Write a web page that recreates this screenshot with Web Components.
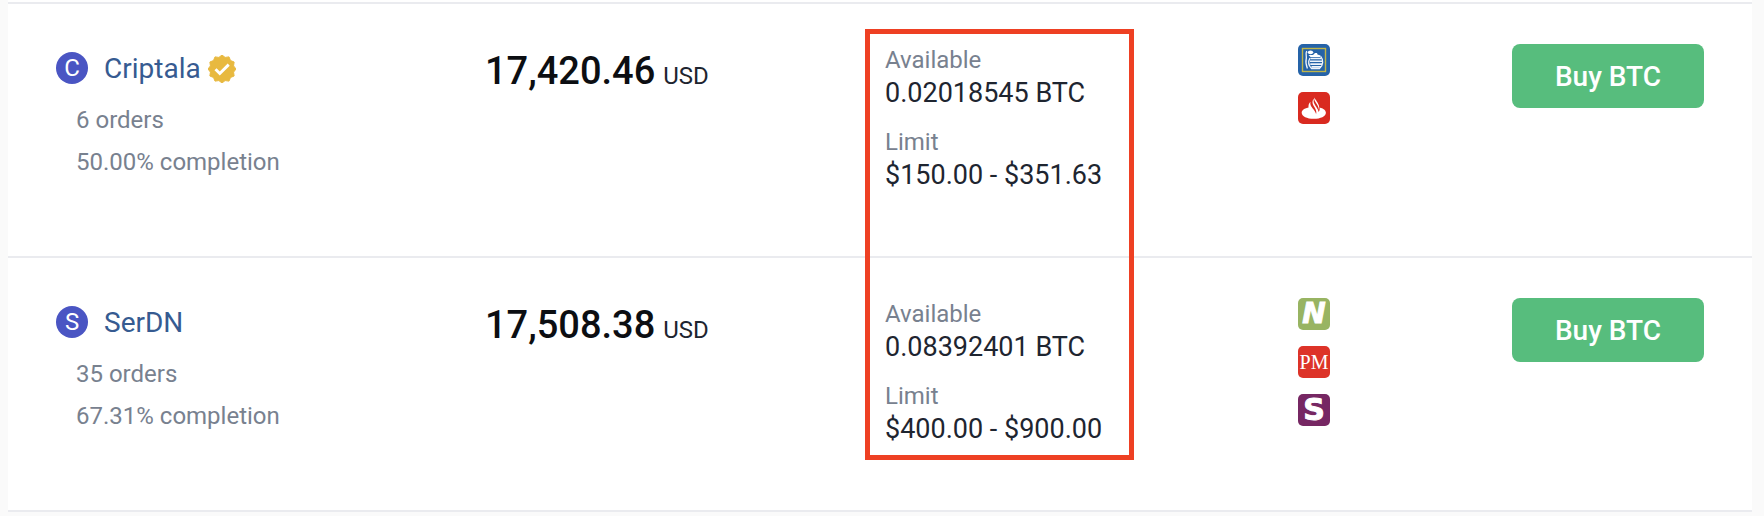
<!DOCTYPE html>
<html lang="en">
<head>
<meta charset="utf-8">
<meta name="viewport" content="width=device-width, initial-scale=1">
<title>P2P offers</title>
<style>
  body {
    margin: 0;
    background: #fafafa;
    color: #1e2530;
    font-family: Roboto, "Liberation Sans", sans-serif;
    --columns: 429fr 400fr 413fr 406fr;
    --gutter: 48px;
    --muted: #78818f;
    --line: #eaebef;
  }
</style>
</head>
<body>
<offer-list>
  <offer-row>
    <offer-trader slot="trader" name="Criptala" orders="6" completion="50.00" verified></offer-trader>
    <offer-price slot="price" amount="17,420.46" currency="USD"></offer-price>
    <offer-limits slot="limits" available="0.02018545 BTC" limit="$150.00 - $351.63"></offer-limits>
    <payment-badge slot="payments" kind="pichincha"></payment-badge>
    <payment-badge slot="payments" kind="santander"></payment-badge>
    <buy-button slot="action">Buy BTC</buy-button>
  </offer-row>
  <offer-row>
    <offer-trader slot="trader" name="SerDN" orders="35" completion="67.31"></offer-trader>
    <offer-price slot="price" amount="17,508.38" currency="USD"></offer-price>
    <offer-limits slot="limits" available="0.08392401 BTC" limit="$400.00 - $900.00"></offer-limits>
    <payment-badge slot="payments" kind="neteller"></payment-badge>
    <payment-badge slot="payments" kind="perfect"></payment-badge>
    <payment-badge slot="payments" kind="skrill"></payment-badge>
    <buy-button slot="action">Buy BTC</buy-button>
  </offer-row>
</offer-list>

<script>
class BaseElement extends HTMLElement {
  connectedCallback() {
    if (this.shadowRoot) return;
    this.attachShadow({ mode: "open" }).innerHTML = this.render();
  }
  attr(name) { return this.getAttribute(name) || ""; }
}

customElements.define("offer-list", class extends BaseElement {
  render() {
    return `
      <style>
        :host { display: block; position: relative; margin: 0 12px 0 8px; padding-top: 2px;
                background: #fff; border-bottom: 2px solid var(--line); }
        .overlay { position: absolute; inset: 29px 0 50px; padding: 0 var(--gutter);
                   display: grid; grid-template-columns: var(--columns); pointer-events: none; }
        .frame { grid-column: 3; box-sizing: border-box; width: 269px; margin-left: -20px;
                 border: 5px solid #ee4023; }
      </style>
      <div role="list"><slot></slot></div>
      <div class="overlay" aria-hidden="true"><div class="frame"></div></div>`;
  }
});

customElements.define("offer-row", class extends BaseElement {
  connectedCallback() {
    super.connectedCallback();
    this.setAttribute("role", "listitem");
  }
  render() {
    return `
      <style>
        :host { display: grid; grid-template-columns: var(--columns); align-items: start;
                box-sizing: border-box; min-height: 254px; padding: 40px var(--gutter) 32px;
                border-top: 2px solid var(--line); }
        .payments { display: grid; gap: 16px; justify-items: start; }
        .last { display: flex; justify-content: space-between; align-items: flex-start; }
      </style>
      <slot name="trader"></slot>
      <slot name="price"></slot>
      <slot name="limits"></slot>
      <div class="last">
        <div class="payments"><slot name="payments"></slot></div>
        <slot name="action"></slot>
      </div>`;
  }
});

customElements.define("offer-trader", class extends BaseElement {
  render() {
    const name = this.attr("name");
    const points = [];
    for (let i = 0; i < 24; i++) {
      const r = i % 2 ? 12 : 14, a = i * Math.PI / 12;
      points.push((14 + r * Math.cos(a)).toFixed(2) + "," + (14 + r * Math.sin(a)).toFixed(2));
    }
    const seal = `<svg viewBox="0 0 28 28" role="img" aria-label="Verified">
      <polygon points="${points.join(" ")}" fill="#e8b93f" stroke="#e8b93f" stroke-linejoin="round"/>
      <path d="M7.500 14.200l4.300 4.300 8.900-8.900" fill="none" stroke="#fff" stroke-width="2.900"/></svg>`;
    return `
      <style>
        :host { display: block; }
        .head { display: flex; align-items: center; height: 48px; }
        .avatar { width: 32px; height: 32px; margin-right: 16px; border-radius: 50%; background: #4a55c3;
                  color: #fff; font-size: 24px; line-height: 32px; text-align: center; }
        .name { display: flex; align-items: center; gap: 7px; padding-top: 2px; }
        a { color: #365b91; font-size: 28px; line-height: 32px; text-decoration: none; }
        svg { width: 28px; height: 28px; }
        ul { list-style: none; margin: 7px 0 0; padding: 0 0 0 20px; color: var(--muted);
             font-size: 24px; line-height: 42px; }
      </style>
      <div class="head">
        <span class="avatar" aria-hidden="true">${name[0]}</span>
        <div class="name"><a href="#${name}">${name}</a>${this.hasAttribute("verified") ? seal : ""}</div>
      </div>
      <ul>
        <li>${this.attr("orders")} orders</li>
        <li>${this.attr("completion")}% completion</li>
      </ul>`;
  }
});

customElements.define("offer-price", class extends BaseElement {
  render() {
    return `
      <style>
        :host { display: flex; align-items: baseline; gap: 8px; line-height: 54px; }
        .amount { color: #0c0e12; font-size: 38px; font-weight: 500; }
        .currency { font-size: 24px; }
      </style>
      <span class="amount">${this.attr("amount")}</span>
      <span class="currency">${this.attr("currency")}</span>`;
  }
});

customElements.define("offer-limits", class extends BaseElement {
  render() {
    return `
      <style>
        :host { display: block; }
        dl { display: grid; gap: 16px; margin: 0; }
        dt { color: var(--muted); font-size: 24px; line-height: 32px; }
        dd { margin: 0; font-size: 27px; line-height: 34px; }
      </style>
      <dl>
        <div><dt>Available</dt><dd>${this.attr("available")}</dd></div>
        <div><dt>Limit</dt><dd>${this.attr("limit")}</dd></div>
      </dl>`;
  }
});

const PAYMENTS = {
  pichincha: { label: "Banco Pichincha", color: "#2563a8", art: `
    <svg viewBox="0 0 32 32"><rect x="4.500" y="4.500" width="23" height="23" fill="none" stroke="#c0b64a" stroke-width="1.400"/>
    <g fill="none" stroke="#eef4fb">
    <path d="M8.700 7c-1.500 3 .2 5-.5 8-.7 3-.2 6 1.200 9.500" stroke-width="1.300"/>
    <path d="M12 14c-2 3.500-1.500 7.500 1.500 10.500h8c3.800-2.800 4.200-8.500 1.200-12" stroke-width="1.300"/>
    <path d="M12.500 14.500h10.500M12 17.300h12M12.300 20.100h11.700M13.500 22.900h9.500" stroke-width="1.600"/></g>
    <ellipse cx="12.500" cy="8.300" rx="2.700" ry="1.900" fill="#fff"/>
    <path d="M10.500 11h4.500l2-2h2l.5 1.500 3 1v1.500h-10z" fill="#fff"/></svg>` },
  santander: { label: "Santander", color: "#d92a20", art: `
    <svg viewBox="0 0 32 32" fill="#fff"><path d="M10.500 15.500C5.500 16.500 3.700 18.600 3.700 20.700c0 3.600 5.300 6.100 12.100 6.100s12.100-2.500 12.100-6.100c0-2.400-2.500-4.400-6.300-5.300.2 1.600 0 3.200-.9 4.700-.4-3.200-3.600-6.100-4.700-9.100-.5-1.300-.5-2.700.1-4.200-2.300 2-1.800 4.700-.2 7.400 1.700 2.900 3.100 5 2.200 8-.5-3.600-4.700-6.300-5.600-9.500-.3-1-.3-1.900 0-3-1.600 1.500-2.200 3.500-2 5.800z"/>
    <path d="M16.200 5.500c-1 3.400 4.900 7.800 4.600 12.300 1.300-3.700-.6-6.200-2.600-9.400-.9-1.300-1.600-1.600-2-2.900z"/></svg>` },
  neteller: { label: "Neteller", color: "#98b462", art: `<b class="n">N</b>` },
  perfect: { label: "Perfect Money", color: "#dd3328", art: `<span class="pm">PM</span>` },
  skrill: { label: "Skrill", color: "#762763", art: `<b class="s">S</b>` }
};

customElements.define("payment-badge", class extends BaseElement {
  render() {
    const { color, art } = PAYMENTS[this.attr("kind")];
    return `
      <style>
        :host { display: flex; justify-content: center; align-items: center; width: 32px; height: 32px;
                border-radius: 5px; background: ${color}; color: #fff; }
        svg { width: 32px; height: 32px; }
        .n { font: italic 700 28px/32px "DejaVu Sans", sans-serif; }
        .s { font: 700 30px/32px "DejaVu Sans", sans-serif; }
        .n, .s { -webkit-text-stroke: 1px #fff; }
        .pm { font: 20px/32px "Liberation Serif", serif; }
      </style>${art}`;
  }
  connectedCallback() {
    super.connectedCallback();
    this.setAttribute("role", "img");
    this.setAttribute("aria-label", PAYMENTS[this.attr("kind")].label);
  }
});

customElements.define("buy-button", class extends BaseElement {
  render() {
    return `
      <style>
        :host { display: block; }
        button { display: block; width: 192px; height: 64px; padding: 2px 0 0; border: 0; border-radius: 8px;
                 background: #57bd7d; color: #fff; font: 500 28px/32px Roboto, "Liberation Sans", sans-serif;
                 cursor: pointer; }
      </style>
      <button type="button"><slot></slot></button>`;
  }
});
</script>
</body>
</html>
